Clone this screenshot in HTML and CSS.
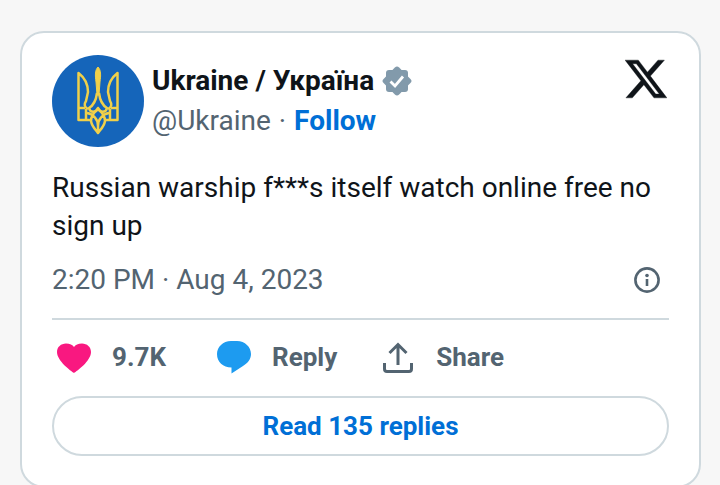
FILE: index.html
```html
<!DOCTYPE html>
<html lang="en">
<head>
    <meta charset="UTF-8">
    <meta name="viewport" content="width=device-width, initial-scale=1.0">
    <title>Ukraine on X</title>
    <link rel="stylesheet" href="styles.css">
</head>
<body>
    <article class="tweet">
        <header class="tweet-header">
            <a href="#" class="avatar" aria-label="Ukraine profile">
                <svg viewBox="0 0 92 92" fill="none" stroke="#f0d04a" stroke-width="2.5" stroke-linejoin="round">
                    <circle cx="46" cy="46" r="46" fill="#1565ba" stroke="none"/>
                    <path d="M39 65H26.500V18C33 23 36 29 36 37L34 46C32 49 32 52 36 54M53 65H65.500V18C59 23 56 29 56 37L58 46C60 49 60 52 56 54"/>
                    <path d="M26.500 53H33M65.500 53H59M34 54V65M58 54V65"/>
                    <path d="M46 12C43 15 43 20 44 27L45 40H47L48 27C49 20 49 15 46 12Z" fill="#f0d04a" stroke-width="1"/>
                    <path d="M45 38C44 46 42 50 37 53C38 58 44 58 46 53C48 58 54 58 55 53C50 50 48 46 47 38"/>
                    <path d="M46 54C41 58 39 62 39 66C40 72 44 75 46 78C48 75 52 72 53 66C53 62 51 58 46 54ZM35 58C41 59 46 64 46 71C46 64 51 59 57 58M46 68V78"/>
                </svg>
            </a>
            <div class="author">
                <div class="name-row">
                    <a href="#" class="name">Ukraine / Україна</a>
                    <svg class="badge" viewBox="0 0 30 30" fill="#829aab" aria-label="Verified">
                        <rect x="4" y="4" width="22" height="22" rx="3"/>
                        <rect x="4" y="4" width="22" height="22" rx="3" transform="rotate(45 15 15)"/>
                        <path d="M8.500 15.500L13 20L21 10.500" fill="none" stroke="#fff" stroke-width="2.8"/>
                    </svg>
                </div>
                <div class="handle-row">
                    <a href="#" class="handle">@Ukraine</a>
                    <span>·</span>
                    <a href="#" class="follow">Follow</a>
                </div>
            </div>
            <a href="#" class="logo" aria-label="View on X">
                <svg viewBox="1.2 2.2 21.7 19.6" fill="#0f1419" stroke="#0f1419" stroke-width=".2">
                    <path d="M18.244 2.25h3.308l-7.227 8.26 8.502 11.24H16.17l-5.214-6.817L4.99 21.75H1.68l7.73-8.835L1.254 2.25H8.08l4.713 6.231zm-1.161 17.52h1.833L7.084 4.126H5.117z"/>
                </svg>
            </a>
        </header>

        <p class="tweet-text">Russian warship f***s itself watch online free no sign up</p>

        <div class="meta">
            <a href="#" class="date">2:20 PM · Aug 4, 2023</a>
            <a href="#" class="info" aria-label="Ads info and privacy">
                <svg viewBox="0 0 26 26" fill="none" stroke="#536471" stroke-width="2.6">
                    <circle cx="13" cy="13" r="11.6"/>
                    <path d="M13 12V19"/>
                    <circle cx="13" cy="8.5" r="1.8" fill="#536471" stroke="none"/>
                </svg>
            </a>
        </div>

        <div class="actions">
            <button type="button" class="action likes">
                <svg viewBox="0 0 34 34" fill="#f91880">
                    <path d="M17 33C14 31 0 21 0 12C0 7 4 3.500 9 3.500C13 3.500 15.500 5 17 7C18.500 5 21 3.500 25 3.500C30 3.500 34 7 34 12C34 21 20 31 17 33Z"/>
                </svg>
                9.7K
            </button>
            <button type="button" class="action">
                <svg viewBox="0 0 34 34" fill="#1d9bf0">
                    <path d="M14 1H20C28 1 34 7 34 14C34 19 31 23 26 26L14.500 33.500V27.500C6 27.500 0 22 0 14C0 7 6 1 14 1Z"/>
                </svg>
                Reply
            </button>
            <button type="button" class="action">
                <svg viewBox="0 0 34 34" fill="none" stroke="#536471" stroke-width="3">
                    <path d="M17 25V5M8.500 13L17 4.500L25.500 13M3.500 23V29Q3.500 31.500 6 31.500H28Q30.500 31.500 30.500 29V23"/>
                </svg>
                Share
            </button>
        </div>

        <a href="#" class="replies">Read 135 replies</a>
    </article>
</body>
</html>
```

FILE: styles.css
```css
* {
    margin: 0;
    padding: 0;
    box-sizing: border-box;
}
body {
    font-family: Roboto, 'Liberation Sans', sans-serif;
    font-size: 28px;
    padding: 31px 19px 0 20px;
    background: #f7f7f7;
    color: #0f1419;
}
a {
    color: inherit;
    text-decoration: none;
}
svg {
    display: block;
    flex-shrink: 0;
}
.tweet {
    padding: 22px 30px 30px;
    background: #fff;
    border: 2px solid #cfd9de;
    border-radius: 24px;
}
.tweet-header {
    display: flex;
    align-items: flex-start;
    gap: 8px;
}
.avatar svg {
    width: 92px;
    height: 92px;
}
.author {
    flex: 1;
    padding-top: 6px;
    line-height: 40px;
}
.name-row {
    display: flex;
    align-items: center;
    gap: 8px;
}
.name {
    font-weight: 700;
}
.badge {
    width: 30px;
    height: 30px;
}
.handle-row {
    display: flex;
    gap: 8px;
    color: #536471;
}
.follow {
    color: #006fd6;
    font-weight: 700;
}
.logo svg {
    width: 42px;
    height: 40px;
    margin: 4px 2px 0 0;
}
.tweet-text {
    margin-top: 22px;
    line-height: 38px;
}
.meta {
    display: flex;
    align-items: center;
    justify-content: space-between;
    margin-top: 14px;
    padding: 0 9px 17px 0;
    line-height: 42px;
    color: #536471;
    border-bottom: 2px solid #cfd9de;
}
.info svg {
    width: 26px;
    height: 26px;
}
.actions {
    display: flex;
    gap: 44px;
    padding: 17px 0 19px 5px;
}
.action {
    display: flex;
    align-items: center;
    gap: 21px;
    font: 700 26px/40px Roboto, 'Liberation Sans', sans-serif;
    color: #536471;
    background: none;
    border: none;
    cursor: pointer;
}
.action svg {
    width: 34px;
    height: 34px;
}
.likes {
    min-width: 116px;
}
.replies {
    display: block;
    font-size: 26px;
    font-weight: 700;
    line-height: 56px;
    text-align: center;
    color: #006fd6;
    border: 2px solid #cfd9de;
    border-radius: 30px;
}
.replies:hover {
    background: #e8f2fb;
}
```
